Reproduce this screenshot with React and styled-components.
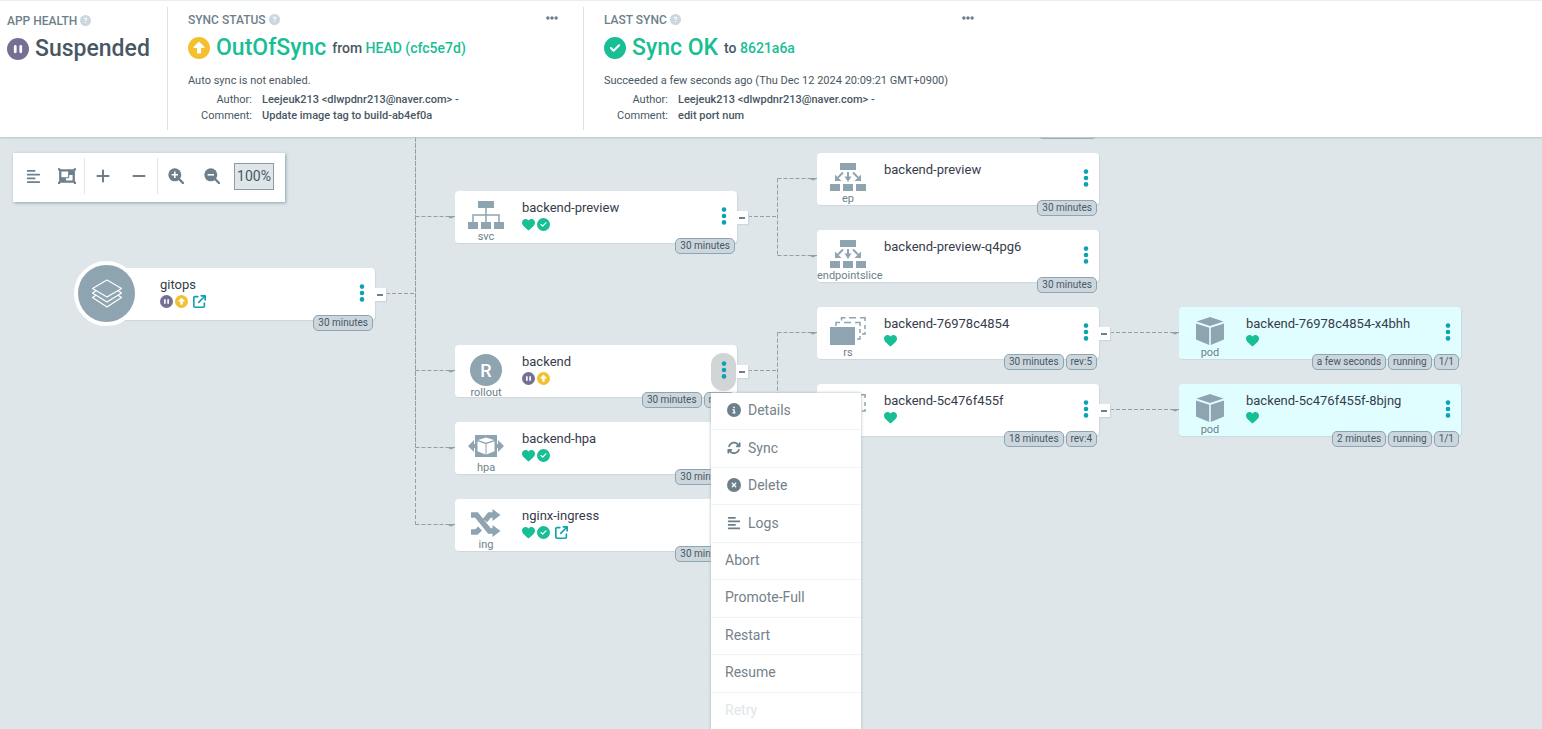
import React from 'react';
import styled, { createGlobalStyle } from 'styled-components';
import { FaAlignLeft, FaEllipsisH, FaObjectGroup } from 'react-icons/fa';
import {
  FaArrowUpRightFromSquare, FaArrowsRotate, FaCircleCheck, FaCircleInfo, FaCirclePause, FaCircleQuestion,
  FaCircleUp, FaCircleXmark, FaHeart, FaMinus, FaPlus,
} from 'react-icons/fa6';

const colors = {
  suspended: '#766f94',
  outOfSync: '#f4c030',
  ok: '#18be94',
  teal: '#0da2b3',
  icon: '#8fa4b1',
  toolbar: '#6d7f8b',
};

const GlobalStyle = createGlobalStyle`
  * { box-sizing: border-box; }
  body {
    margin: 0;
    font-family: Roboto, "Liberation Sans", sans-serif;
    color: #495763;
    background: #dee6e9;
  }
  button, input { font-family: inherit; }
  button { padding: 0; border: 0; background: none; color: inherit; cursor: pointer; }
  svg { display: block; flex-shrink: 0; }
`;

const Page = styled.div`
  display: flex;
  flex-direction: column;
  min-height: 100vh;
`;

const StatusBar = styled.header`
  display: flex;
  align-items: stretch;
  padding: 6px 0 7px;
  background: #fff;
  border-top: 1px solid #e8eeef;
  box-shadow: 0 1px 2px #b4c3c9;
  position: relative;
  z-index: 2;
`;

const Panel = styled.section`
  width: ${props => props.$width};
  min-height: 123px;
  padding: ${props => (props.$first ? '6px 7px 0' : '5px 20px 0')};
  border-left: ${props => (props.$first ? '0' : '1px solid #d9e1e5')};
  white-space: nowrap;
`;

const PanelTitle = styled.div`
  display: flex;
  align-items: center;
  gap: 3px;
  height: 15px;
  font-size: 12px;
  font-weight: 500;
  color: #6d7f8b;

  svg { color: #ccd6dd; }
  button { align-self: flex-start; margin-left: auto; padding-right: 5px; }
  button svg { color: #6d7f8b; }
`;

const Headline = styled.div`
  display: flex;
  align-items: center;
  gap: 6px;
  height: 41px;
  font-size: 23px;
  font-weight: 500;
  color: ${props => props.$color || '#495763'};

  svg { color: ${props => props.$iconColor}; }
`;

const Revision = styled.span`
  font-size: 14px;
  color: #495763;

  a { color: ${colors.ok}; text-decoration: none; }
`;

const Note = styled.div`
  margin-top: 5px;
  font-size: 11px;
  line-height: 16px;
`;

const Meta = styled.dl`
  display: grid;
  grid-template-columns: 64px 1fr;
  column-gap: 10px;
  margin: 3px 0 0;
  font-size: 11px;
  line-height: 16px;

  dt { text-align: right; }
  dd { margin: 0; font-weight: 500; }
`;

const Canvas = styled.main`
  position: relative;
  flex: 1;
  min-height: 592px;
  overflow: hidden;
`;

const Toolbar = styled.div`
  position: absolute;
  top: 16px;
  left: 13px;
  display: flex;
  align-items: center;
  height: 49px;
  padding: 0 11px 3px 3px;
  background: #fff;
  box-shadow: 1px 1px 3px #8fa4b1;
`;

const ToolGroup = styled.div`
  display: flex;
  align-items: center;
  height: 36px;
  border-right: ${props => (props.$last ? '0' : '1px solid #dee6e9')};
`;

const Tool = styled.button`
  display: flex;
  justify-content: center;
  width: ${props => props.$width || 36}px;
  color: ${colors.toolbar};
`;

const Zoom = styled.input`
  width: 40px;
  height: 27px;
  margin-left: 4px;
  padding: 0;
  border: 1px solid #8f9aa3;
  background: #dee6e9;
  color: #495763;
  font-size: 14px;
  text-align: center;
`;

const Edges = styled.svg`
  position: absolute;
  top: 0;
  left: 0;
  width: 1542px;
  height: 592px;
`;

const NodeBox = styled.article`
  position: absolute;
  display: flex;
  width: 282px;
  height: 52px;
  border-radius: 4px;
  background: ${props => (props.$pod ? '#e0feff' : '#fff')};
  box-shadow: 1px 1px 1px #ccd6dd;
  z-index: ${props => (props.$open ? 1 : 0)};
`;

const Kind = styled.div`
  display: flex;
  flex-direction: column;
  align-items: safe center;
  width: 62px;
  margin-right: 5px;
  padding-top: 9px;
  color: ${colors.icon};
  white-space: nowrap;

  span {
    font-size: 11px;
    line-height: 13px;
    color: #6d7f8b;
  }
`;

const KindIcon = styled.div`
  display: flex;
  align-items: center;
  justify-content: center;
  width: 62px;
  height: 32px;
`;

const RootBadge = styled.div`
  position: absolute;
  top: -7px;
  left: -19px;
  display: flex;
  align-items: center;
  justify-content: center;
  width: 65px;
  height: 65px;
  border: 4px solid #fff;
  border-radius: 50%;
  background: ${colors.icon};
`;

const RolloutBadge = styled.div`
  display: flex;
  align-items: center;
  justify-content: center;
  width: 32px;
  height: 32px;
  border-radius: 50%;
  background: ${colors.icon};
  color: #fff;
  font-size: 18px;
  font-weight: 500;
`;

const NodeBody = styled.div`
  flex: 1;
  padding-top: 8px;
  white-space: nowrap;
`;

const NodeName = styled.div`
  font-size: 13px;
  line-height: 18px;
  color: #363c4a;
`;

const NodeStatus = styled.div`
  display: flex;
  align-items: center;
  gap: 2px;
  height: 14px;

  a { margin-left: 3px; color: ${colors.teal}; }
`;

const Kebab = styled.button`
  display: flex;
  align-items: center;
  justify-content: center;
  width: 25px;
  height: 38px;
  margin: 8px 1px 0 0;
  padding-bottom: 4px;
  border-radius: 12px;
  background: ${props => (props.$open ? '#d2d5d6' : 'transparent')};
`;

const Tags = styled.div`
  position: absolute;
  top: 47px;
  right: 2px;
  display: flex;
  gap: 2px;
`;

const Tag = styled.span`
  height: 16px;
  padding: 0 4px;
  border: 1px solid #8fa4b1;
  border-radius: 5px;
  background: #ccd6dd;
  color: #495763;
  font-size: 10px;
  line-height: 14px;
  white-space: nowrap;
`;

// lower edge of the tag of the node scrolled out above
const TagEdge = styled.div`
  position: absolute;
  top: -14px;
  left: 1038px;
  width: 59px;
  height: 16px;
  border: 1px solid #8fa4b1;
  border-radius: 5px;
  background: #ccd6dd;
`;

const Collapse = styled.button`
  position: absolute;
  top: 20px;
  left: 282px;
  display: flex;
  align-items: center;
  justify-content: center;
  width: 11px;
  height: 13px;
  background: #fff;
  box-shadow: 1px 1px 1px #ccd6dd;
`;

const Menu = styled.ul`
  position: absolute;
  top: 48px;
  left: 256px;
  display: flex;
  flex-direction: column;
  width: 150px;
  height: 336px;
  margin: 0;
  padding: 0;
  list-style: none;
  background: #fff;
  box-shadow: 0 0 3px #a9b6be;
`;

const MenuItem = styled.li`
  display: flex;
  flex: 1;
  border-bottom: 1px solid #eef3f4;

  &:last-child { border-bottom: 0; }

  button {
    display: flex;
    flex: 1;
    align-items: center;
    gap: 5px;
    padding: 0 14px 2px;
    color: #75828a;
    font-size: 14px;
  }
  button svg { width: 18px; color: #6d7f8b; }
  button:disabled { color: #dee6e9; }
`;

const LayersIcon = () => (
  <svg width="32" height="32" viewBox="0 0 32 32" fill="none" stroke="#fff" strokeWidth="1.2" strokeLinejoin="round">
    <path d="M16 2 30.500 10.500 16 19 1.500 10.500Z" />
    <path d="M5 12.700 1.500 15 16 24 30.500 15 27 12.700" />
    <path d="M5 17.200 1.500 19.500 16 29 30.500 19.500 27 17.200" />
  </svg>
);

const MagnifierIcon = ({ plus }) => (
  <svg width="16" height="16" viewBox="0 0 16 16">
    <path d="M10.500 10.500 15 15" stroke="currentColor" strokeWidth="2.400" strokeLinecap="round" />
    <circle cx="6.800" cy="6.800" r="6.500" fill="currentColor" />
    <path d={plus ? 'M3.600 6.800h6.400M6.800 3.600v6.400' : 'M3.600 6.800h6.400'} stroke="#fff" strokeWidth="1.600" />
  </svg>
);

const ServiceIcon = () => (
  <svg width="36" height="28" viewBox="0 0 36 28" fill="currentColor">
    <path d="M10 0h16v7H10zM0 21h10v7H0zM13 21h10v7H13zM26 21h10v7H26z" />
    <path d="M18 7v14M5 21v-7h26v7" fill="none" stroke="currentColor" strokeWidth="1.500" />
  </svg>
);

const EndpointIcon = () => (
  <svg width="36" height="28" viewBox="0 0 36 28" fill="currentColor">
    <path d="M10 0h16v7H10zM0 21h10v7H0zM13 21h10v7H13zM26 21h10v7H26z" />
    <path d="M13 9.500 8 14.500M18 9v6M23 9.500l5 5" fill="none" stroke="currentColor" strokeWidth="2" />
    <path d="M5 18v-6.500l6.500 6.500zM14.500 13.500h7L18 19zM31 18v-6.500L24.500 18z" />
  </svg>
);

const ReplicaIcon = () => (
  <svg width="36" height="28" viewBox="0 0 36 28" fill="none" stroke="currentColor" strokeWidth="1.500">
    <path d="M0 10h25v18H0z" fill="currentColor" stroke="none" />
    <path d="M6 9V5.500h4M14 5.500h7M25 5.500h5V9M30 12v4M30 19v3h-3" />
    <path d="M11.500 3.500V.750h4M19 .750h7M30 .750h5V4M35 8v4M35 15v2h-3" />
  </svg>
);

const PodIcon = () => (
  <svg width="28" height="28" viewBox="0 0 28 28" fill="currentColor">
    <path d="M14 0 27.500 4.500 14 9 .500 4.500ZM0 6.500l13.200 4.200V28L0 22.500ZM28 6.500l-13.200 4.200V28L28 22.500Z" />
  </svg>
);

const HpaIcon = () => (
  <svg width="36" height="22" viewBox="0 0 36 22" fill="currentColor">
    <path d="M7 0h22v22H7z" />
    <path d="M0 11 6 5v4h3v4H6v4ZM36 11l-6-6v4h-3v4h3v4Z" />
    <path d="m18 2.500 8 2.500-8 2.700L10 5ZM9.500 6.300l8 2.600v10.600l-8-3.300ZM26.500 6.300l-8 2.600v10.600l8-3.300Z" fill="#fff" />
  </svg>
);

const IngressIcon = () => (
  <svg width="30" height="28" viewBox="0 0 30 28" fill="currentColor">
    <path d="M0 23h5.500L9 19.500M14 11.500 18.500 6H23M0 6h5.500L18.500 22H23" fill="none" stroke="currentColor" strokeWidth="5.500" />
    <path d="M21.500 0 29.500 6l-8 6zM21.500 16 29.500 22l-8 6z" />
  </svg>
);

const Dots = () => (
  <svg width="6" height="18" viewBox="0 0 6 18" fill={colors.teal}>
    <circle cx="3" cy="2.600" r="2.300" />
    <circle cx="3" cy="9" r="2.300" />
    <circle cx="3" cy="15.400" r="2.300" />
  </svg>
);

const CollapseIcon = () => (
  <svg width="7" height="3" viewBox="0 0 7 3">
    <path d="M0 1h6v2H0z" fill="#6d7f8b" />
  </svg>
);

const kindIcons = {
  svc: <ServiceIcon />,
  ep: <EndpointIcon />,
  endpointslice: <EndpointIcon />,
  rollout: <RolloutBadge>R</RolloutBadge>,
  hpa: <HpaIcon />,
  ing: <IngressIcon />,
  rs: <ReplicaIcon />,
  pod: <PodIcon />,
};

const statusIcons = {
  healthy: <FaHeart size={13} color={colors.ok} />,
  synced: <FaCircleCheck size={13} color={colors.ok} />,
  suspended: <FaCirclePause size={13} color={colors.suspended} />,
  outOfSync: <FaCircleUp size={13} color={colors.outOfSync} />,
};

const nodes = [
  { name: 'gitops', x: 93, y: 131, root: true, status: ['suspended', 'outOfSync'], link: true, tags: ['30 minutes'], children: true },
  { name: 'backend-preview', kind: 'svc', x: 455, y: 54, status: ['healthy', 'synced'], tags: ['30 minutes'], children: true },
  { name: 'backend', kind: 'rollout', x: 455, y: 208, status: ['suspended', 'outOfSync'], tags: ['30 minutes', 'rev:5'], children: true, open: true },
  { name: 'backend-hpa', kind: 'hpa', x: 455, y: 285, status: ['healthy', 'synced'], tags: ['30 minutes'] },
  { name: 'nginx-ingress', kind: 'ing', x: 455, y: 362, status: ['healthy', 'synced'], link: true, tags: ['30 minutes'] },
  { name: 'backend-preview', kind: 'ep', x: 817, y: 16, status: [], tags: ['30 minutes'] },
  { name: 'backend-preview-q4pg6', kind: 'endpointslice', x: 817, y: 93, status: [], tags: ['30 minutes'] },
  { name: 'backend-76978c4854', kind: 'rs', x: 817, y: 170, status: ['healthy'], tags: ['30 minutes', 'rev:5'], children: true },
  { name: 'backend-5c476f455f', kind: 'rs', x: 817, y: 247, status: ['healthy'], tags: ['18 minutes', 'rev:4'], children: true },
  { name: 'backend-76978c4854-x4bhh', kind: 'pod', x: 1179, y: 170, status: ['healthy'], tags: ['a few seconds', 'running', '1/1'] },
  { name: 'backend-5c476f455f-8bjng', kind: 'pod', x: 1179, y: 247, status: ['healthy'], tags: ['2 minutes', 'running', '1/1'] },
];

const edges = [
  'M386 156.500H415.500', 'M415.500 0V387.500', 'M415.500 1V310.500',
  'M415.500 79.500H455', 'M415.500 233.500H455', 'M415.500 310.500H455', 'M415.500 387.500H455',
  'M748 79.500H777.500', 'M777.500 41.500V118.500', 'M777.500 41.500H817', 'M777.500 118.500H817',
  'M748 233.500H777.500', 'M777.500 195.500V272.500', 'M777.500 195.500H817', 'M777.500 272.500H817',
  'M1110 195.500H1179', 'M1110 272.500H1179',
];

const menuItems = [
  { label: 'Details', icon: <FaCircleInfo size={14} /> },
  { label: 'Sync', icon: <FaArrowsRotate size={14} /> },
  { label: 'Delete', icon: <FaCircleXmark size={14} /> },
  { label: 'Logs', icon: <FaAlignLeft size={14} /> },
  { label: 'Abort' },
  { label: 'Promote-Full' },
  { label: 'Restart' },
  { label: 'Resume' },
  { label: 'Retry', disabled: true },
];

const ResourceNode = ({ node }) => (
  <NodeBox $pod={node.kind === 'pod'} $open={node.open} style={{ left: node.x, top: node.y }}>
    {node.root && <RootBadge><LayersIcon /></RootBadge>}
    <Kind>
      {!node.root && <KindIcon>{kindIcons[node.kind]}</KindIcon>}
      <span>{node.kind}</span>
    </Kind>
    <NodeBody>
      <NodeName>{node.name}</NodeName>
      <NodeStatus>
        {node.status.map(s => <React.Fragment key={s}>{statusIcons[s]}</React.Fragment>)}
        {node.link && <a href="#open" aria-label="Open application"><FaArrowUpRightFromSquare size={13} /></a>}
      </NodeStatus>
    </NodeBody>
    <Kebab $open={node.open} aria-label={`${node.name} actions`}><Dots /></Kebab>
    <Tags>{node.tags.map(tag => <Tag key={tag}>{tag}</Tag>)}</Tags>
    {node.children && <Collapse aria-label="Collapse"><CollapseIcon /></Collapse>}
    {node.open && (
      <Menu>
        {menuItems.map(item => (
          <MenuItem key={item.label}>
            <button disabled={item.disabled}>{item.icon}{item.label}</button>
          </MenuItem>
        ))}
      </Menu>
    )}
  </NodeBox>
);

const CommitInfo = ({ author, comment }) => (
  <Meta>
    <dt>Author:</dt>
    <dd>{author}</dd>
    <dt>Comment:</dt>
    <dd>{comment}</dd>
  </Meta>
);

const App = () => {
  const author = 'Leejeuk213 <dlwpdnr213@naver.com> -';

  return (
    <Page>
      <GlobalStyle />
      <StatusBar>
        <Panel $first $width="167px">
          <PanelTitle>APP HEALTH<FaCircleQuestion size={11} /></PanelTitle>
          <Headline $iconColor={colors.suspended}><FaCirclePause size={22} />Suspended</Headline>
        </Panel>
        <Panel $width="416px">
          <PanelTitle>
            SYNC STATUS<FaCircleQuestion size={11} />
            <button aria-label="Sync details"><FaEllipsisH size={12} /></button>
          </PanelTitle>
          <Headline $color={colors.ok} $iconColor={colors.outOfSync}>
            <FaCircleUp size={22} />OutOfSync
            <Revision>from <a href="#head">HEAD (cfc5e7d)</a></Revision>
          </Headline>
          <Note>Auto sync is not enabled.</Note>
          <CommitInfo author={author} comment="Update image tag to build-ab4ef0a" />
        </Panel>
        <Panel $width="416px">
          <PanelTitle>
            LAST SYNC<FaCircleQuestion size={11} />
            <button aria-label="Last sync details"><FaEllipsisH size={12} /></button>
          </PanelTitle>
          <Headline $color={colors.ok} $iconColor={colors.ok}>
            <FaCircleCheck size={22} />Sync OK
            <Revision>to <a href="#revision">8621a6a</a></Revision>
          </Headline>
          <Note>Succeeded a few seconds ago (Thu Dec 12 2024 20:09:21 GMT+0900)</Note>
          <CommitInfo author={author} comment="edit port num" />
        </Panel>
      </StatusBar>
      <Canvas>
        <Edges fill="none" stroke="#8fa0a8" strokeDasharray="4 2">
          {edges.map(d => <path key={d} d={d} />)}
          {edges.filter(d => /H(455|817|1179)$/.test(d)).map(d => {
            const [, y, x] = d.match(/ ([\d.]+)H(\d+)/);
            return <path key={`tip-${d}`} d={`M${x - 7} ${y}h6l-3 1.500z`} strokeDasharray="none" fill="#8fa0a8" />;
          })}
        </Edges>
        <TagEdge />
        {nodes.map(node => <ResourceNode key={`${node.kind}-${node.name}`} node={node} />)}
        <Toolbar>
          <ToolGroup>
            <Tool $width={34} aria-label="Align"><FaAlignLeft size={15} /></Tool>
            <Tool $width={34} aria-label="Group nodes"><FaObjectGroup size={18} /></Tool>
          </ToolGroup>
          <ToolGroup>
            <Tool aria-label="Expand all"><FaPlus size={16} /></Tool>
            <Tool aria-label="Collapse all"><FaMinus size={16} /></Tool>
          </ToolGroup>
          <ToolGroup $last>
            <Tool aria-label="Zoom in"><MagnifierIcon plus /></Tool>
            <Tool aria-label="Zoom out"><MagnifierIcon /></Tool>
            <Zoom readOnly value="100%" aria-label="Zoom level" />
          </ToolGroup>
        </Toolbar>
      </Canvas>
    </Page>
  );
};

export default App;
